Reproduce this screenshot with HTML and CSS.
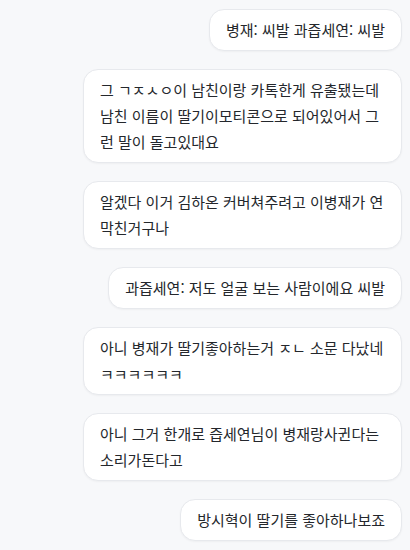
FILE: index.html
```html
<!DOCTYPE html>
<html lang="ko">

<head>
  <meta charset="UTF-8">
  <meta name="viewport" content="width=device-width, initial-scale=1.0">
  <title>채팅</title>
  <link rel="stylesheet" href="styles.css">
</head>

<body>
  <div class="chat">
    <div class="msg">병재: 씨발 과즙세연: 씨발</div>
    <div class="msg">그 ㄱㅈㅅㅇ이 남친이랑 카톡한게 유출됐는데 남친 이름이 딸기이모티콘으로 되어있어서 그런 말이 돌고있대요</div>
    <div class="msg">알겠다 이거 김하온 커버쳐주려고 이병재가 연막친거구나</div>
    <div class="msg">과즙세연: 저도 얼굴 보는 사람이에요 씨발</div>
    <div class="msg">아니 병재가 딸기좋아하는거 ㅈㄴ 소문 다났네 ㅋㅋㅋㅋㅋㅋ</div>
    <div class="msg">아니 그거 한개로 즙세연님이 병재랑사귄다는 소리가돈다고</div>
    <div class="msg">방시혁이 딸기를 좋아하나보죠</div>
  </div>
</body>

</html>
```

FILE: styles.css
```css
* {
  padding: 0;
  margin: 0;
  box-sizing: border-box;
}

body {
  background: #f7f8fa;
  font-family: "Noto Sans CJK KR", "Noto Sans", sans-serif;
  color: #24272c;
}

.chat {
  display: flex;
  flex-direction: column;
  align-items: flex-end;
  gap: 18px;
  padding: 9px 8px 9px 8px;
}

.msg {
  max-width: 319px;
  background: #fff;
  border: 1px solid #e7e9ed;
  border-radius: 15px;
  box-shadow: 0 1px 2px rgba(0, 0, 0, 0.04);
  padding: 7px 16px;
  font-size: 15px;
  line-height: 26px;
}
```
